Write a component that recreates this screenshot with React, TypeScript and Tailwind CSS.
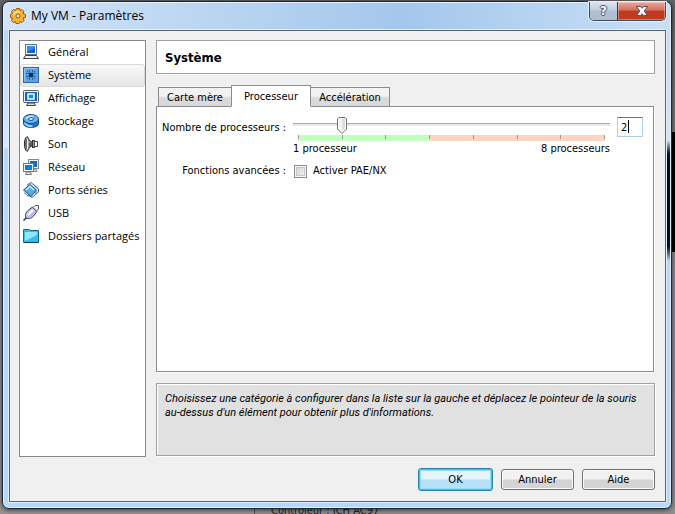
import { useState } from "react";
import type { ReactNode } from "react";

const CATEGORIES: { label: string; icon: ReactNode }[] = [
  {
    label: "Général",
    icon: (
      <>
        <rect x="2.5" y="0.5" width="11" height="10" fill="#f4f4f4" stroke="#6b6f76" />
        <rect x="4" y="2" width="8" height="7" fill="#0a60d0" />
        <path d="M4 2h8v2L4 8z" fill="#2f8ff0" />
        <path d="M2.500 11.500h11l2 3h-15z" fill="#e8e8e8" stroke="#3c3f45" />
        <path d="M3 13h10" stroke="#fff" />
      </>
    ),
  },
  {
    label: "Système",
    icon: (
      <>
        <rect x="0.5" y="0.5" width="15" height="15" fill="#5ba4ea" stroke="#2f68a8" />
        <path d="M1.500 14V1.500H14" fill="none" stroke="#8fc3f5" />
        <path d="M4 4h1v1H4zM6 3h1v2H6zM9 3h1v2H9zM11 4h1v1h-1zM3 6h2v1H3zM3 9h2v1H3zM11 6h2v1h-2zM11 9h2v1h-2zM4 11h1v1H4zM6 11h1v2H6zM9 11h1v2H9zM11 11h1v1h-1z" fill="#1c5fae" />
        <rect x="5" y="5" width="6" height="6" fill="#3d86d6" />
        <rect x="6" y="6" width="4" height="4" fill="#0d2747" />
      </>
    ),
  },
  {
    label: "Affichage",
    icon: (
      <>
        <rect x="0.500" y="0.500" width="15" height="12" rx="1" fill="#f2f2f2" stroke="#5a5e65" />
        <rect x="2" y="2" width="12" height="9" fill="#0868d8" />
        <rect x="5" y="4" width="6" height="5" fill="#1689f1" stroke="#fff" strokeWidth="1.500" />
        <path d="M3.500 15.500h9l-1.500-2.500H5z" fill="#ddd" stroke="#44484e" />
      </>
    ),
  },
  {
    label: "Stockage",
    icon: (
      <>
        <path d="M0.500 6v4.500c0 5.300 15 5.300 15 0V6z" fill="#2273d0" stroke="#173f74" />
        <path d="M1.500 9.500c1 3.500 6 4 8 3.700" fill="none" stroke="#8fd0ff" strokeWidth="2" />
        <ellipse cx="8" cy="6" rx="7.500" ry="4.500" fill="#64b5f2" stroke="#1b4f8d" />
        <path d="M2 5.500c2-3 7-3.500 9-2.700L8 6z" fill="#c4e8ff" />
        <ellipse cx="8" cy="6" rx="2.500" ry="1.400" fill="#fff" stroke="#174a85" />
      </>
    ),
  },
  {
    label: "Son",
    icon: (
      <>
        <path d="M4 .500C.500 3 .500 13 4 15.500c1.500-1 2-3 2-4L9 10V6L6 4.500c0-1-.500-3-2-4z" fill="#a8a8a8" stroke="#282828" />
        <path d="M3 3v10" stroke="#5a5a5a" strokeWidth="1.500" />
        <path d="M4.500 3v10" stroke="#eee" />
        <path d="M6 6.500l3 1v2L6 10.500" fill="#555" />
        <rect x="9.500" y="4.500" width="2" height="7" fill="#999" stroke="#333" />
        <rect x="11.500" y="5.500" width="3" height="5" fill="#eee" stroke="#555" />
      </>
    ),
  },
  {
    label: "Réseau",
    icon: (
      <>
        <rect x="5.500" y="0.500" width="10" height="9" fill="#f2f2f2" stroke="#888" />
        <rect x="7" y="2" width="7" height="6" fill="#1269ce" />
        <path d="M9 12.500h5l-1-2.500h-3z" fill="#ddd" stroke="#888" />
        <rect x="0.500" y="4.500" width="10" height="8" fill="#fff" stroke="#777" />
        <rect x="2" y="6" width="7" height="5" fill="#087bea" />
        <path d="M2.500 15.500h6l-1-2.500h-4z" fill="#eee" stroke="#777" />
      </>
    ),
  },
  {
    label: "Ports séries",
    icon: (
      <>
        <path d="M4 3l4-2.500L15.500 7v3L9 15.500 5 13" fill="#e2eef6" stroke="#4d6478" />
        <path d="M0.500 8L7 2.500 13.500 8 8 14.500z" fill="#4eaee7" stroke="#24547b" />
        <path d="M3 8l4-3.500L11 8" fill="none" stroke="#c7edff" strokeWidth="1.500" />
        <path d="M1 10.500L5.500 14.500M10 2l5 4.500M13 9v3" stroke="#527189" />
      </>
    ),
  },
  {
    label: "USB",
    icon: (
      <>
        <path d="M0.500 15.500l4-4" stroke="#333748" strokeWidth="1.500" />
        <path d="M3 13c-1.500-3 0-6 2.500-8l4-3L14 6.500l-3 4C9 13 6 14.500 3 13z" fill="#bcbfea" stroke="#3c3d60" />
        <path d="M5 10l5-5" stroke="#fff" strokeWidth="2" />
        <path d="M10 2.500l2-2h3.500V4l-2 2z" fill="#f2f2f2" stroke="#555" />
      </>
    ),
  },
  {
    label: "Dossiers partagés",
    icon: (
      <>
        <path d="M0.500 14.500v-13h6l1 1h8v12z" fill="#37bce9" stroke="#156b91" />
        <path d="M2 4h12v3L2 13z" fill="#93e5fb" />
        <path d="M1 14.500h14.500" stroke="#073e59" />
      </>
    ),
  },
];

const TABS = [
  { label: "Carte mère", width: "w-[74px]" },
  { label: "Processeur", width: "w-20" },
  { label: "Accélération", width: "w-20" },
];

const MIN = 1;
const MAX = 8;
const TICKS = [1, 2, 3, 4, 5, 6, 7, 8];

function GearIcon() {
  return (
    <svg viewBox="0 0 16 16" className="size-4" aria-hidden="true">
      <path
        d="M6.500.500h3l.5 2 1.500-1 2.500 2-1 2 2.500 1v3l-2.500.500 1 2.500-2 2-2-1-1 2h-3l-.500-2-2 1-2-2 1-2.500-2-.500v-3l2-1-1-2 2-2 2 1z"
        fill="#fbb42a"
        stroke="#93560c"
      />
      <path d="M4 7c0-3 4-4 6-2.500" fill="none" stroke="#ffe99a" strokeWidth="1.500" />
      <circle cx="8" cy="8" r="2" fill="#d7e9fb" stroke="#93560c" />
    </svg>
  );
}

function TitleBar() {
  return (
    <header className="flex h-7 items-start justify-between">
      <div className="flex h-7 items-center gap-[5px] pl-px">
        <GearIcon />
        <h1 className="font-['Open_Sans','Noto_Sans',sans-serif] text-[12px] leading-4 text-black">My VM - Paramètres</h1>
      </div>
      <div className="flex h-[19px] overflow-hidden rounded-b-[5px] border border-t-0 border-[#404c5b] shadow-[0_0_0_1px_#e2effc]">
        <button
          aria-label="Aide contextuelle"
          className="flex w-[27px] items-center justify-center bg-linear-to-b from-[#dce5f0] from-0% via-[#c0cddd] via-45% to-[#aebfd3] to-50% font-['DejaVu_Sans',sans-serif] text-[12px] leading-4 font-bold text-white [text-shadow:1px_0_#4c5065,-1px_0_#4c5065,0_1px_#4c5065,0_-1px_#4c5065]"
        >
          ?
        </button>
        <button
          aria-label="Fermer"
          className="flex w-12 items-center justify-center border-l border-[#6b2018] bg-linear-to-b from-[#e9a99f] from-0% via-[#d1705f] via-45% to-[#c13a20] to-50% shadow-[inset_0_0_0_1px_#ffffff55]"
        >
          <svg viewBox="0 0 12 10" className="h-[10px] w-3" aria-hidden="true">
            <path d="M.500.500h4L6 2.300 7.500.500h4L8.200 5l3.300 4.500h-4L6 7.700 4.500 9.500h-4L3.800 5z" fill="#fff" stroke="#5b4a5c" />
          </svg>
        </button>
      </div>
    </header>
  );
}

function ProcessorSlider({ value, onChange }: { value: number; onChange: (n: number) => void }) {
  const ratio = (value - MIN) / (MAX - MIN);
  return (
    <div>
      <div className="relative flex h-[18px] flex-col pt-[6px]">
        <div className="h-[3px] border-t border-[#a9acab] bg-[#e7eaea]" />
        <div className="absolute inset-y-0 right-[5px] left-[5px]">
          <svg viewBox="0 0 10 17" className="absolute top-0 h-[17px] w-[10px] -translate-x-1/2" style={{ left: `${ratio * 100}%` }} aria-hidden="true">
            <path d="M2 .500h6L9.500 2v10L5 16.500.500 12V2z" fill="#f3f3f3" stroke="#707070" />
            <path d="M5.500 2H8v9l-2.500 3z" fill="#dcdcdc" />
            <path d="M1.500 2.500v9L5 15l3.500-3.500v-9" fill="none" stroke="#fff" />
          </svg>
        </div>
        <input
          id="cpu-slider"
          type="range"
          min={MIN}
          max={MAX}
          value={value}
          onChange={(e) => onChange(Number(e.target.value))}
          className="absolute inset-0 m-0 w-full opacity-0"
        />
      </div>
      <div className="mx-[5px] flex h-[6px] justify-between bg-linear-to-r from-[#c0ffc0] from-43% to-[#ffd3c0] to-43%">
        {TICKS.map((t) => (
          <span key={t} className="h-1 w-px bg-[#a09a8d]" />
        ))}
      </div>
      <div className="flex justify-between leading-4">
        <span>1 processeur</span>
        <span>8 processeurs</span>
      </div>
    </div>
  );
}

export default function App() {
  const [category, setCategory] = useState(1);
  const [tab, setTab] = useState(1);
  const [cpus, setCpus] = useState(2);

  return (
    <div className="relative flex min-h-screen flex-col overflow-hidden bg-linear-to-b from-[#62646b] from-0% via-[#8a8a8a] via-50% to-[#929292] to-100% pt-px pr-[3px] pb-[5px] pl-[2px] font-['DejaVu_Sans_Condensed','DejaVu_Sans',sans-serif] text-[11px] leading-[14px] text-black">
      <div className="absolute top-[132px] right-0 h-[120px] w-1 bg-black" />
      <div className="absolute -bottom-[3px] left-[254px] h-3 w-[420px] border-l border-[#56565b] bg-[#8d8d8d] pl-4 leading-3 whitespace-nowrap text-[#202020]">
        Contrôleur : ICH AC97
      </div>

      <main className="relative flex flex-1 flex-col rounded-[7px] border border-[#1c2733] bg-[linear-gradient(to_bottom,#c9def5_0,#bcd6f2_30px,#d8e8f8_145px,#b5d7fd_147px)] pr-[5px] pb-[6px] pl-[6px] shadow-[inset_0_0_0_1px_#e4f1fd,0_1px_4px_#000000a0]">
        <div className="absolute inset-x-px top-px h-[27px] rounded-t-md bg-linear-to-r from-[#d3e4f7] via-[#a3c7ed] via-60% to-[#c9dff6]" />
        <div className="absolute top-[28px] right-px h-[230px] w-1 bg-linear-to-b from-[#c5dbf3] from-0% via-[#d5e3f2] via-48% to-[#080c15] to-54%" />
        <div className="absolute top-[244px] right-px h-[14px] w-1 bg-linear-to-b from-[#080c15] to-[#a5c8ec]" />
        <div className="relative">
          <TitleBar />
        </div>

        <div className="relative flex flex-1 flex-col border border-[#566474] bg-[#f0f0f0] pt-[9px] pr-[10px] pb-[10px] pl-[9px] shadow-[0_0_0_1px_#e0effd]">
          <div className="flex flex-1 gap-[10px]">
            <nav className="w-[127px] shrink-0 border border-[#828790] bg-white">
              {CATEGORIES.map((c, i) => (
                <button
                  key={c.label}
                  onClick={() => setCategory(i)}
                  className={
                    "flex h-[23px] w-full items-center gap-[9px] rounded-[3px] border pb-[2px] pl-[2px] text-left font-['Open_Sans','Noto_Sans',sans-serif] text-[11px] leading-4 whitespace-nowrap " +
                    (i === category ? "border-[#d9d9d9] bg-linear-to-b from-[#f8f8f8] to-[#e6e6e6]" : "border-transparent")
                  }
                >
                  <svg viewBox="0 0 16 16" className="size-4 shrink-0" aria-hidden="true">
                    {c.icon}
                  </svg>
                  {c.label}
                </button>
              ))}
            </nav>

            <section className="flex min-w-0 flex-1 flex-col pb-px">
              <h2 className="flex h-[34px] items-center border border-[#a0a0a0] bg-white pt-px pl-2 text-[13px] leading-4 font-bold shadow-[0_1px_0_#ffffff]">
                {CATEGORIES[category].label}
              </h2>

              <div role="tablist" className="relative mt-[11px] -mb-px flex h-[22px] items-end pl-[2px]">
                {TABS.map((t, i) => (
                  <button
                    key={t.label}
                    role="tab"
                    aria-selected={i === tab}
                    onClick={() => setTab(i)}
                    className={
                      t.width +
                      " -mr-px border border-[#898c95] pt-px text-center " +
                      (i === tab
                        ? "z-10 h-[22px] border-b-white bg-white"
                        : "h-5 bg-linear-to-b from-[#f2f2f2] from-45% to-[#dadada] to-55%")
                    }
                  >
                    {t.label}
                  </button>
                ))}
              </div>

              <div role="tabpanel" className="mr-px flex-1 border border-[#898c95] bg-white pt-[10px] pr-[10px] pl-[5px] shadow-[1px_1px_0_#ffffff]">
                <div className="grid grid-cols-[auto_1fr_26px] gap-x-[7px] gap-y-[6px]">
                  <label htmlFor="cpu-slider" className="pt-[3px] text-right leading-4">
                    Nombre de processeurs :
                  </label>
                  <ProcessorSlider value={cpus} onChange={setCpus} />
                  <div className="relative h-5">
                    <input
                      type="text"
                      aria-label="Nombre de processeurs"
                      value={cpus}
                      onChange={(e) => setCpus(Math.min(MAX, Math.max(MIN, Number(e.target.value) || MIN)))}
                      className="h-5 w-full rounded-[1px] border border-[#a9cfea] border-t-[#3d7bad] bg-white pl-[3px] leading-[14px] outline-none"
                    />
                    <span className="absolute top-[3px] left-[11px] h-[13px] w-px bg-black" />
                  </div>

                  <span className="text-right leading-4">Fonctions avancées :</span>
                  <label className="flex items-center gap-[6px] pl-px leading-4">
                    <input
                      type="checkbox"
                      className="size-[13px] appearance-none border border-[#8e8f8f] bg-linear-to-br from-[#cbcfd5] to-[#f6f6f6] shadow-[inset_0_0_0_1px_#f4f4f4,inset_0_0_0_2px_#c4c8cc] checked:bg-[#3d7bad]"
                    />
                    Activer PAE/NX
                  </label>
                </div>
              </div>

              <p className="mt-[11px] h-[73px] border border-[#a0a0a0] bg-[#e1e1e1] pt-2 pr-1 pl-2 font-[Roboto,sans-serif] leading-[14px] italic shadow-[inset_1px_1px_0_#ffffff,1px_1px_0_#ffffff]">
                Choisissez une catégorie à configurer dans la liste sur la gauche et déplacez le pointeur de la souris
                au-dessus d'un élément pour obtenir plus d'informations.
              </p>
            </section>
          </div>

          <footer className="mt-[11px] flex items-center justify-end gap-2">
            <button className="h-[23px] w-[75px] rounded-[3px] border border-[#2b7fa8] bg-linear-to-b from-[#e6f4fb] from-48% to-[#b6e1f8] to-52% pt-px shadow-[inset_0_0_0_1px_#2fc9f5,inset_0_0_0_2px_#8fdff8]">
              OK
            </button>
            <button className="h-[21px] w-[73px] rounded-[3px] border border-[#707070] bg-linear-to-b from-[#f1f1f1] from-48% to-[#d4d4d4] to-52% pt-px shadow-[inset_0_0_0_1px_#fafafa]">
              Annuler
            </button>
            <button className="h-[21px] w-[73px] rounded-[3px] border border-[#707070] bg-linear-to-b from-[#f1f1f1] from-48% to-[#d4d4d4] to-52% pt-px shadow-[inset_0_0_0_1px_#fafafa]">
              Aide
            </button>
          </footer>
        </div>
      </main>
    </div>
  );
}
